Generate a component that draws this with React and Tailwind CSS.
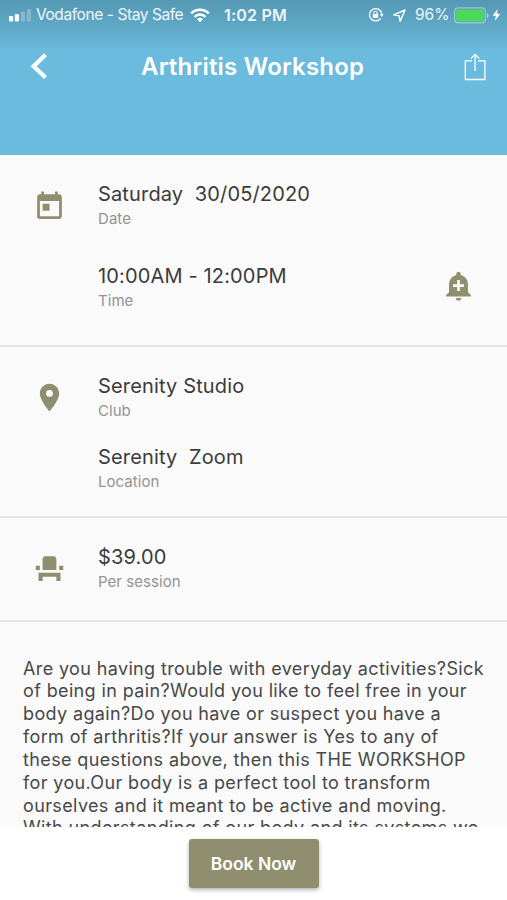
import { MdToday, MdAddAlert, MdPlace, MdEventSeat } from 'react-icons/md';

const description = [
  'Are you having trouble with everyday activities?Sick',
  'of being in pain?Would you like to feel free in your',
  'body again?Do you have or suspect you have a',
  'form of arthritis?If your answer is Yes to any of',
  'these questions above, then this THE WORKSHOP',
  'for you.Our body is a perfect tool to transform',
  'ourselves and it meant to be active and moving.',
  'With understanding of our body and its systems we',
];

function StatusBar() {
  return (
    <div className="flex h-[30px] items-center pl-2 pr-[6px] text-white/90">
      <svg width="24" height="14" viewBox="0 0 24 14" fill="#fff">
        <rect x="1" y="8" width="4.2" height="5.5" rx="1" />
        <rect x="6.8" y="6" width="4.2" height="7.5" rx="1" />
        <rect x="12.8" y="3.5" width="4.2" height="10" rx="1" opacity="0.25" />
        <rect x="18.8" y="1" width="4.2" height="12.5" rx="1" opacity="0.25" />
      </svg>
      <span className="ml-1 w-[148px] whitespace-nowrap text-[15.5px] tracking-[-0.42px]">Vodafone - Stay Safe</span>
      <svg className="ml-1.5" width="20" height="15" viewBox="0 0 20 15" fill="none" stroke="#fff" strokeWidth="2.4">
        <path d="M1.2 5.4a12.6 12.6 0 0 1 17.6 0" />
        <path d="M4.5 8.8a7.9 7.9 0 0 1 11 0" />
        <path d="M10 14.2 7 11.2a4.3 4.3 0 0 1 6 0z" fill="#fff" stroke="none" />
      </svg>
      <span className="ml-3.5 whitespace-nowrap text-[16px] font-semibold tracking-[0.2px]">1:02 PM</span>
      <div className="ml-auto flex items-center">
        <svg width="16" height="16" viewBox="0 0 16 16" fill="none" stroke="#fff" strokeWidth="1.3">
          <path d="M12.6 11.5A6.2 6.2 0 1 1 13.8 7" />
          <path d="M11.8 7.2h4l-2 2.8z" fill="#fff" stroke="none" />
          <rect x="4.8" y="7" width="5.4" height="4" rx="0.6" fill="#fff" stroke="none" />
          <path d="M5.8 7.2V6a1.7 1.7 0 0 1 3.4 0v1.2" strokeWidth="1.1" />
        </svg>
        <svg className="ml-2" width="15" height="15" viewBox="0 0 15 15" fill="none" stroke="#fff" strokeWidth="1.4" strokeLinejoin="round">
          <path d="M13 2 1.6 6.9l5.6.9.9 5.6z" />
        </svg>
        <span className="ml-2 w-[35px] whitespace-nowrap text-[15.5px]">96%</span>
        <svg className="ml-1" width="36" height="17" viewBox="0 0 36 17">
          <rect x="0.7" y="0.9" width="30.6" height="15" rx="3" fill="none" stroke="#fff" strokeOpacity="0.5" />
          <rect x="2.2" y="2.4" width="27.6" height="12" rx="1.4" fill="#4cd95b" />
          <path d="M33 6v5c2-.8 2-4.2 0-5z" fill="#fff" opacity="0.5" />
        </svg>
        <svg className="ml-0.5" width="9" height="14" viewBox="0 0 9 14" fill="#fff">
          <path d="M5.6 1 .6 7.8h3.2L2.9 13l5.4-7.2H5z" />
        </svg>
      </div>
    </div>
  );
}

function Header() {
  return (
    <header className="h-[155px] shrink-0 bg-[#6abbdd] bg-[linear-gradient(#5598b4,#5fa9c7_28px,#6abbdd_52px)] text-white">
      <StatusBar />
      <div className="flex h-[74px] items-center pl-[30px] pr-[20px]">
        <svg width="24" height="28" viewBox="0 0 24 28" fill="none" stroke="#fff" strokeWidth="4.2">
          <path d="M15.5 1.8 3.6 13.2l11.9 11.4" />
        </svg>
        <h1 className="ml-[87px] whitespace-nowrap text-[24px] font-semibold tracking-[0.2px]">Arthritis Workshop</h1>
        <svg className="ml-auto" width="24" height="28" viewBox="0 0 24 28" fill="none" stroke="#fff" strokeWidth="1.3">
          <path d="M9 7.8H2.3v18.7h19.6V7.8H15" />
          <path d="M12.1 18V1.3M7.8 5.6l4.3-4.3 4.3 4.3" />
        </svg>
      </div>
    </header>
  );
}

function Field({ value, label }) {
  return (
    <div>
      <p className="whitespace-pre text-[20px] leading-[26px] tracking-[0.15px] text-[#3b3b3b]">{value}</p>
      <p className="text-[15px] leading-[23px] tracking-[0.05px] text-[#939393]">{label}</p>
    </div>
  );
}

export default function App() {
  return (
    <div className="flex h-[900px] w-[507px] flex-col overflow-hidden bg-[#fafafa] font-['Inter',sans-serif]">
      <Header />
      <main className="min-h-0 flex-1 overflow-hidden">
        <section className="flex h-[192px] border-b-2 border-[#e6e6e6] pt-[26px]">
          <MdToday className="ml-[33px] mt-[9px] size-[33px] shrink-0 text-[#8f8e6e]" />
          <div className="ml-8 flex flex-1 flex-col gap-[33px]">
            <Field value="Saturday  30/05/2020" label="Date" />
            <Field value="10:00AM - 12:00PM" label="Time" />
          </div>
          <MdAddAlert className="mr-8 mt-[88px] size-[33px] text-[#8f8e6e]" />
        </section>
        <section className="flex h-[171px] border-b-2 border-[#e6e6e6] pt-[26px]">
          <MdPlace className="ml-[33px] mt-2 size-[33px] shrink-0 text-[#8f8e6e]" />
          <div className="ml-8 flex flex-col gap-[22px]">
            <Field value="Serenity Studio" label="Club" />
            <Field value="Serenity  Zoom" label="Location" />
          </div>
        </section>
        <section className="flex h-[104px] border-b-2 border-[#e6e6e6] pt-[26px]">
          <MdEventSeat className="ml-[33px] mt-2 size-[33px] shrink-0 text-[#8f8e6e]" />
          <div className="ml-8">
            <Field value="$39.00" label="Per session" />
          </div>
        </section>
        <div className="whitespace-nowrap pl-[23px] pt-[35.5px] text-[18px] leading-[22.85px] tracking-[0.37px] text-[#484848]">
          {description.map((line) => (
            <p key={line}>{line}</p>
          ))}
        </div>
      </main>
      <footer className="flex h-[73px] shrink-0 justify-center bg-white pt-3">
        <button className="h-[49px] w-[130px] rounded-[3px] bg-[#8f8e6e] pt-px text-[17.5px] font-semibold text-white shadow-[0_2px_4px_rgba(0,0,0,0.3)]">
          Book Now
        </button>
      </footer>
    </div>
  );
}
